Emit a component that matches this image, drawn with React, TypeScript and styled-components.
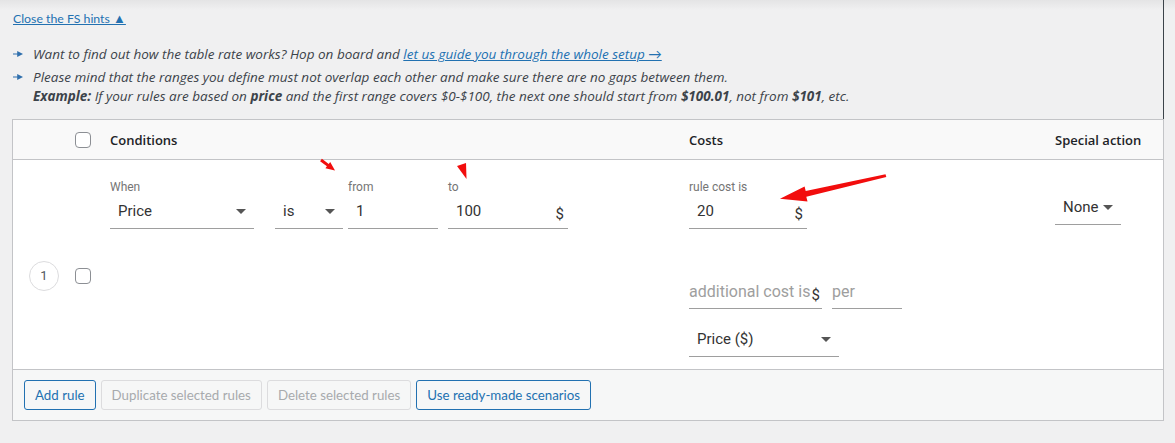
import React from 'react';
import styled, { createGlobalStyle } from 'styled-components';

const GlobalStyle = createGlobalStyle`
  html, body {
    margin: 0;
    padding: 0;
    background: #f0f0f1;
  }
  body {
    font-family: "Open Sans", Lato, sans-serif;
    font-size: 13px;
    color: #3c434a;
  }
  * { box-sizing: border-box; }
`;

const Page = styled.div`
  position: relative;
  width: 1175px;
  height: 443px;
  padding: 0 12px;
  background: linear-gradient(#e4e4e5, #f0f0f1 10px);
  overflow: hidden;
`;

const Hints = styled.div`
  width: 1152px;
  height: 119px;
  padding: 9px 0 0 1px;
  border-right: 1px solid #3c434a;
`;

const ToggleLink = styled.a`
  display: inline-block;
  color: #2271b1;
  text-decoration: underline;
  font-family: Lato, sans-serif;
  font-size: 12.3px;
  line-height: 18px;

  span {
    font-size: 13px;
  }
`;

const HintList = styled.ul`
  list-style: none;
  margin: 17px 0 0;
  padding: 0;
  display: flex;
  flex-direction: column;
  gap: 4px;
`;

const HintItem = styled.li`
  display: flex;
  align-items: flex-start;
  gap: 10px;
  font-style: italic;
  font-size: 13.5px;
  line-height: 19px;
  color: #3c434a;

  svg {
    flex: none;
    margin-top: 6px;
  }

  a {
    color: #2271b1;
    text-decoration: underline;
  }
`;

const Table = styled.div`
  width: 1152px;
  border: 1px solid #c3c4c7;
  background: #fff;
`;

const Grid = styled.div<{ $header?: boolean }>`
  display: grid;
  grid-template-columns: 62px 35px 579px 366px 1fr;
  background: ${p => (p.$header ? '#f9f9f9' : '#fff')};
  border-bottom: 1px solid #c3c4c7;
  min-height: ${p => (p.$header ? '40px' : '210px')};
  align-items: ${p => (p.$header ? 'center' : 'start')};
`;

const HeadCell = styled.div`
  font-weight: 600;
  font-size: 13px;
  color: #1d2327;
`;

const Checkbox = styled.span`
  display: block;
  width: 16px;
  height: 16px;
  border: 1px solid #8c8f94;
  border-radius: 4px;
  background: #fff;
`;

const CenterCell = styled.div`
  align-self: center;
  margin-top: 22px;
  display: flex;
  align-items: center;
`;

const RowNumber = styled.span`
  width: 30px;
  height: 30px;
  margin-left: 16px;
  border: 1px solid #dcdcde;
  border-radius: 50%;
  display: flex;
  align-items: center;
  justify-content: center;
  font-family: Roboto, sans-serif;
  font-size: 13px;
  color: #50575e;
`;

const FieldRow = styled.div<{ $pt?: number }>`
  display: flex;
  align-items: flex-start;
  padding-top: ${p => p.$pt ?? 20}px;
`;

const CostStack = styled.div`
  display: flex;
  flex-direction: column;
  padding-top: 20px;
`;

const Field = styled.div<{ $w: number; $ml?: number; $mt?: number }>`
  width: ${p => p.$w}px;
  margin-left: ${p => p.$ml ?? 0}px;
  margin-top: ${p => p.$mt ?? 0}px;
  flex: none;
`;

const Label = styled.div`
  height: 14px;
  font-family: Roboto, sans-serif;
  font-size: 12px;
  line-height: 14px;
  color: #757575;
`;

const Control = styled.div<{ $muted?: boolean; $flush?: boolean }>`
  height: 35px;
  display: flex;
  align-items: center;
  justify-content: ${p => (p.$flush ? 'flex-start' : 'space-between')};
  padding: ${p => (p.$muted ? '2px' : '0')} ${p => (p.$flush ? '0' : '8px')} 1px ${p => (p.$flush ? '0' : '8px')};
  border-bottom: 1px solid #9e9e9e;
  font-family: Roboto, sans-serif;
  font-size: ${p => (p.$muted ? '16px' : '15px')};
  color: ${p => (p.$muted ? '#9e9e9e' : '#333')};
`;

const Suffix = styled.span<{ $tight?: boolean }>`
  margin-top: 6px;
  margin-right: ${p => (p.$tight ? '0' : '-4px')};
  margin-left: ${p => (p.$tight ? '1px' : '0')};
  font-family: Roboto, sans-serif;
  font-size: 15px;
  color: #333;
`;

const Caret = styled.span`
  width: 0;
  height: 0;
  margin-top: 2px;
  border-left: 5px solid transparent;
  border-right: 5px solid transparent;
  border-top: 5px solid #555;
`;

const Special = styled.div`
  padding-top: 30px;
`;

const Footer = styled.div`
  display: flex;
  gap: 5px;
  padding: 10px 11px;
  background: #f6f7f7;
`;

const Button = styled.button<{ $disabled?: boolean }>`
  height: 30px;
  padding: 0 10px;
  border-radius: 3px;
  border: 1px solid ${p => (p.$disabled ? '#dcdcde' : '#2271b1')};
  background: #f6f7f7;
  color: ${p => (p.$disabled ? '#a7aaad' : '#2271b1')};
  font-family: Lato, "Open Sans", sans-serif;
  font-size: 13.3px;
  cursor: ${p => (p.$disabled ? 'default' : 'pointer')};
`;

const Annotations = styled.svg`
  position: absolute;
  left: 0;
  top: 0;
  pointer-events: none;
`;

const Bullet = () => (
  <svg width="10" height="6" viewBox="0 0 10 6">
    <path d="M0 2.4h4.2V0L10 3 4.2 6V3.6H0z" fill="#2f6fad" />
  </svg>
);

const Select: React.FC<{ value: string }> = ({ value }) => (
  <Control>
    <span>{value}</span>
    <Caret />
  </Control>
);

export default function App() {
  return (
    <>
      <GlobalStyle />
      <Page>
        <Hints>
          <ToggleLink>
            Close the FS hints <span>▲</span>
          </ToggleLink>
          <HintList>
            <HintItem>
              <Bullet />
              <span>
                Want to find out how the table rate works? Hop on board and{' '}
                <a>let us guide you through the whole setup →</a>
              </span>
            </HintItem>
            <HintItem>
              <Bullet />
              <span>
                Please mind that the ranges you define must not overlap each other and make sure there are no gaps between them.
                <br />
                <b>Example:</b> If your rules are based on <b>price</b> and the first range covers $0-$100, the next one should
                start from <b>$100.01</b>, not from <b>$101</b>, etc.
              </span>
            </HintItem>
          </HintList>
        </Hints>

        <Table>
          <Grid $header>
            <span />
            <Checkbox />
            <HeadCell>Conditions</HeadCell>
            <HeadCell>Costs</HeadCell>
            <HeadCell>Special action</HeadCell>
          </Grid>

          <Grid>
            <CenterCell>
              <RowNumber>1</RowNumber>
            </CenterCell>
            <CenterCell>
              <Checkbox />
            </CenterCell>

            <FieldRow>
              <Field $w={144}>
                <Label>When</Label>
                <Select value="Price" />
              </Field>
              <Field $w={68} $ml={21}>
                <Label />
                <Select value="is" />
              </Field>
              <Field $w={90} $ml={5}>
                <Label>from</Label>
                <Control>
                  <span>1</span>
                </Control>
              </Field>
              <Field $w={120} $ml={10}>
                <Label>to</Label>
                <Control>
                  <span>100</span>
                  <Suffix>$</Suffix>
                </Control>
              </Field>
            </FieldRow>

            <CostStack>
              <Field $w={118}>
                <Label>rule cost is</Label>
                <Control>
                  <span>20</span>
                  <Suffix>$</Suffix>
                </Control>
              </Field>
              <FieldRow $pt={0}>
                <Field $w={133} $mt={45}>
                  <Control $muted $flush>
                    <span>additional cost is</span>
                    <Suffix $tight>$</Suffix>
                  </Control>
                </Field>
                <Field $w={70} $ml={10} $mt={45}>
                  <Control $muted $flush>
                    <span>per</span>
                  </Control>
                </Field>
              </FieldRow>
              <Field $w={150} $mt={13}>
                <Select value="Price ($)" />
              </Field>
            </CostStack>

            <Special>
              <Field $w={66}>
                <Select value="None" />
              </Field>
            </Special>
          </Grid>

          <Footer>
            <Button>Add rule</Button>
            <Button $disabled>Duplicate selected rules</Button>
            <Button $disabled>Delete selected rules</Button>
            <Button>Use ready-made scenarios</Button>
          </Footer>
        </Table>

        <Annotations width="1175" height="443" viewBox="0 0 1175 443">
          <g fill="#f20d0d" stroke="none">
            <path d="M321.9 158.8L328.7 163.9 330.2 161.9 335 170.5 325.4 168.3 326.9 166.3 320.1 161.2z" />
            <path d="M457 166l9-3 0.5 16z" />
            <path d="M885.5 174.2l0.8 2.8-80 19.8 1.2 4.6-27.5-2.6 24.6-12.4 1.1 4.7z" />
          </g>
        </Annotations>
      </Page>
    </>
  );
}
